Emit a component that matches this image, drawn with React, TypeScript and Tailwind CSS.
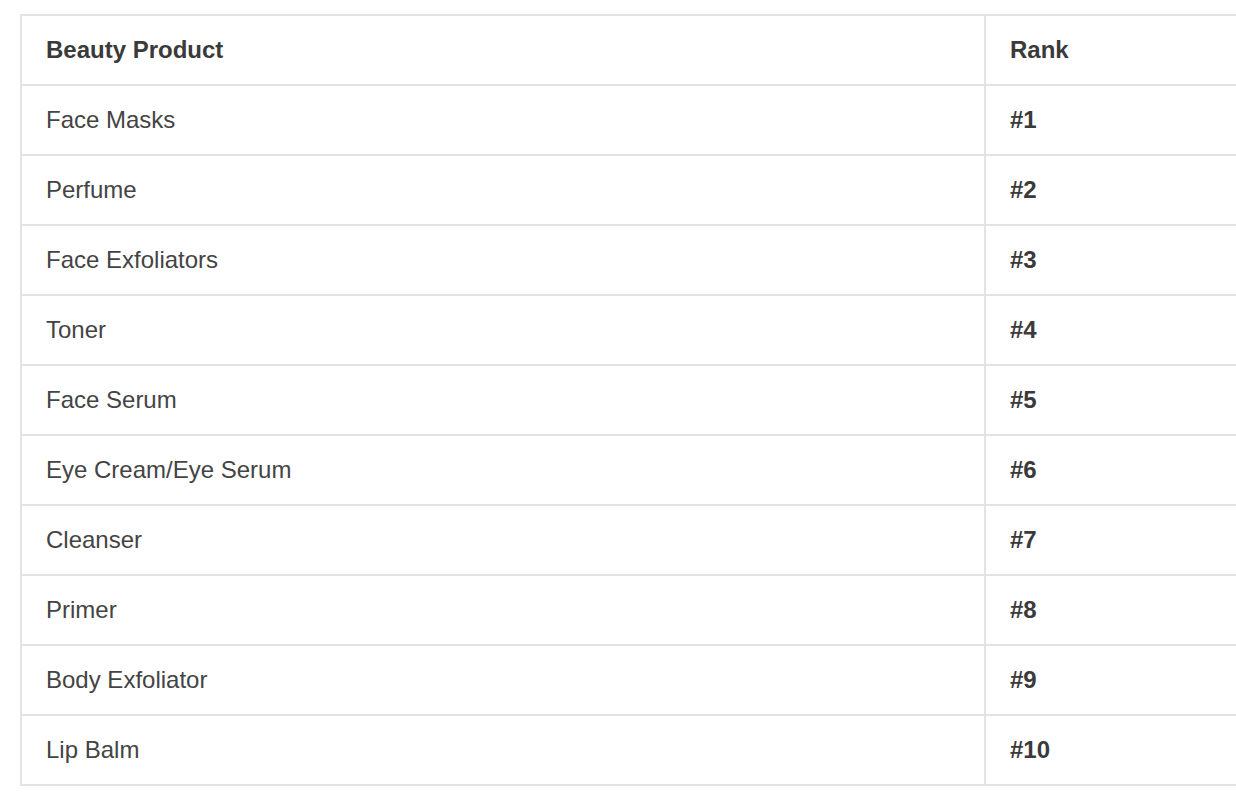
const rows = [
  { product: "Face Masks", rank: "#1" },
  { product: "Perfume", rank: "#2" },
  { product: "Face Exfoliators", rank: "#3" },
  { product: "Toner", rank: "#4" },
  { product: "Face Serum", rank: "#5" },
  { product: "Eye Cream/Eye Serum", rank: "#6" },
  { product: "Cleanser", rank: "#7" },
  { product: "Primer", rank: "#8" },
  { product: "Body Exfoliator", rank: "#9" },
  { product: "Lip Balm", rank: "#10" },
];

const App = () => {
  return (
    <div className="w-[1236px] h-[796px] overflow-hidden bg-white pt-[14px] pl-[20px] font-['Liberation_Sans',Arial,sans-serif] text-[24px] text-[#444444]">
      <table className="w-[1320px] table-fixed border-separate border-spacing-0 border-t-2 border-l-2 border-[#e3e3e3]">
        <colgroup>
          <col className="w-[964px]" />
          <col />
        </colgroup>
        <thead>
          <tr>
            <th className="h-[70px] border-r-2 border-b-2 border-[#e3e3e3] pl-[24px] text-left font-bold text-[#3a3a3a]">
              Beauty Product
            </th>
            <th className="h-[70px] border-r-2 border-b-2 border-[#e3e3e3] pl-[24px] text-left font-bold text-[#3a3a3a]">
              Rank
            </th>
          </tr>
        </thead>
        <tbody>
          {rows.map((row) => (
            <tr key={row.rank}>
              <td className="h-[70px] border-r-2 border-b-2 border-[#e3e3e3] pl-[24px]">
                {row.product}
              </td>
              <td className="h-[70px] border-r-2 border-b-2 border-[#e3e3e3] pl-[24px] font-bold text-[#3a3a3a]">
                {row.rank}
              </td>
            </tr>
          ))}
        </tbody>
      </table>
    </div>
  );
};

export default App;
